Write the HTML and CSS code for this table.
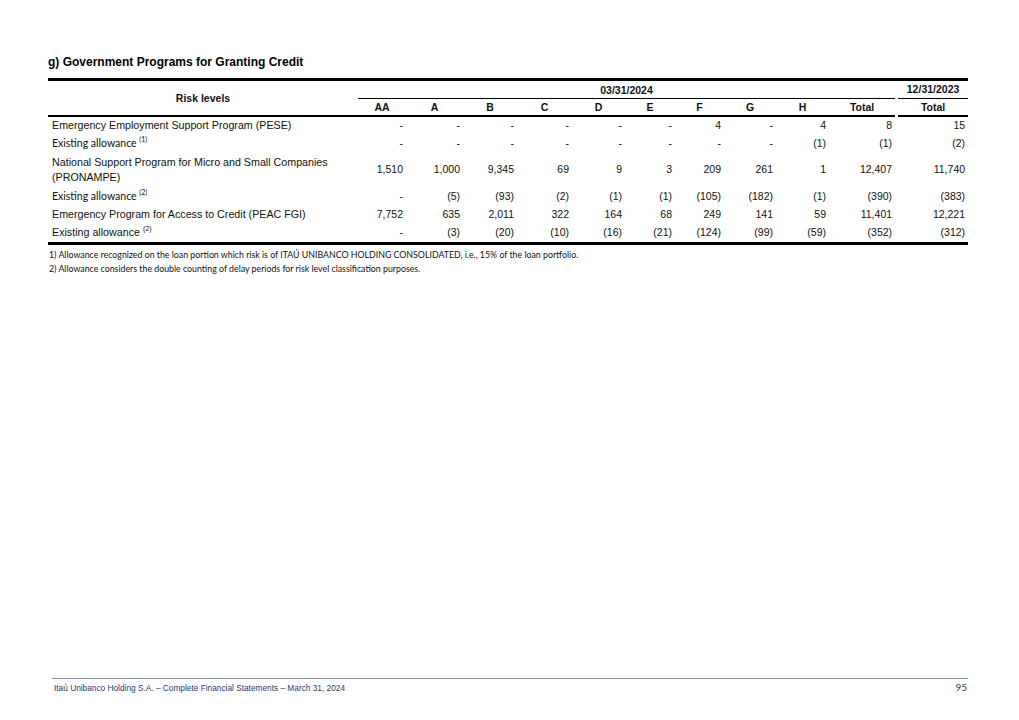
FILE: index.html
```html
<!DOCTYPE html>
<html lang="en">
<head>
<meta charset="utf-8">
<title>Government Programs for Granting Credit</title>
<link rel="stylesheet" href="styles.css">
</head>
<body>
<div class="page">
  <main class="content">
    <h2 class="title">g) Government Programs for Granting Credit</h2>
    <table class="grid">
      <colgroup>
        <col class="c-label">
        <col class="c-aa"><col class="c-a"><col class="c-b"><col class="c-c"><col class="c-d">
        <col class="c-e"><col class="c-f"><col class="c-g"><col class="c-h"><col class="c-tot">
        <col class="c-tot23">
      </colgroup>
      <thead>
        <tr class="hr1">
          <th rowspan="2" class="risk">Risk levels</th>
          <th colspan="10" class="period">03/31/2024</th>
          <th class="y23"><div class="cap cap1">12/31/2023</div></th>
        </tr>
        <tr class="hr2">
          <th>AA</th><th>A</th><th>B</th><th>C</th><th>D</th><th>E</th><th>F</th><th>G</th><th>H</th><th>Total</th>
          <th class="y23"><div class="cap cap2">Total</div></th>
        </tr>
      </thead>
      <tbody>
        <tr class="r1">
          <td class="label">Emergency Employment Support Program (PESE)</td>
          <td>-</td><td>-</td><td>-</td><td>-</td><td>-</td><td>-</td><td>4</td><td>-</td><td>4</td><td>8</td><td>15</td>
        </tr>
        <tr class="r2">
          <td class="label cal">Existing allowance <sup>(1)</sup></td>
          <td>-</td><td>-</td><td>-</td><td>-</td><td>-</td><td>-</td><td>-</td><td>-</td><td>(1)</td><td>(1)</td><td>(2)</td>
        </tr>
        <tr class="r3">
          <td class="label">National Support Program for Micro and Small Companies<br>(PRONAMPE)</td>
          <td>1,510</td><td>1,000</td><td>9,345</td><td>69</td><td>9</td><td>3</td><td>209</td><td>261</td><td>1</td><td>12,407</td><td>11,740</td>
        </tr>
        <tr class="r4">
          <td class="label cal">Existing allowance <sup>(2)</sup></td>
          <td>-</td><td>(5)</td><td>(93)</td><td>(2)</td><td>(1)</td><td>(1)</td><td>(105)</td><td>(182)</td><td>(1)</td><td>(390)</td><td>(383)</td>
        </tr>
        <tr class="r5">
          <td class="label">Emergency Program for Access to Credit (PEAC FGI)</td>
          <td>7,752</td><td>635</td><td>2,011</td><td>322</td><td>164</td><td>68</td><td>249</td><td>141</td><td>59</td><td>11,401</td><td>12,221</td>
        </tr>
        <tr class="r6">
          <td class="label">Existing allowance <sup>(2)</sup></td>
          <td>-</td><td>(3)</td><td>(20)</td><td>(10)</td><td>(16)</td><td>(21)</td><td>(124)</td><td>(99)</td><td>(59)</td><td>(352)</td><td>(312)</td>
        </tr>
      </tbody>
    </table>
    <div class="notes">
      <p>1) Allowance recognized on the loan portion which risk is of ITAÚ UNIBANCO HOLDING CONSOLIDATED, i.e., 15% of the loan portfolio.</p>
      <p>2) Allowance considers the double counting of delay periods for risk level classification purposes.</p>
    </div>
  </main>
  <footer class="footer">
    <span class="foot-text">Itaú Unibanco Holding S.A. – Complete Financial Statements – March 31, 2024</span>
    <span class="foot-page">95</span>
  </footer>
</div>
</body>
</html>
```

FILE: styles.css
```css
html, body {
  margin: 0;
  padding: 0;
  background: #ffffff;
}

.page {
  width: 1019px;
  height: 720px;
  box-sizing: border-box;
  padding: 0 51px 0 48px;
  display: flex;
  flex-direction: column;
  font-family: "Liberation Sans", Arial, sans-serif;
  color: #111;
}

.content {
  flex: 0 0 auto;
}

.title {
  margin: 55px 0 0 0;
  font-size: 12px;
  line-height: 14px;
  font-weight: bold;
  color: #000;
}

.grid {
  margin-top: 9px;
  width: 920px;
  table-layout: fixed;
  border-collapse: separate;
  border-spacing: 0;
  font-size: 10.5px;
}

.c-label { width: 310px; }
.c-aa { width: 48px; }
.c-a { width: 57px; }
.c-b { width: 54px; }
.c-c { width: 55px; }
.c-d { width: 53px; }
.c-e { width: 50px; }
.c-f { width: 49px; }
.c-g { width: 52px; }
.c-h { width: 53px; }
.c-tot { width: 66px; }
.c-tot23 { width: 73px; }

.grid th {
  font-weight: bold;
  text-align: center;
  padding: 0;
  color: #111;
}

.hr1 th {
  border-top: 3px solid #000;
  height: 17px;
  vertical-align: middle;
}

.hr1 th.period {
  border-bottom: 1px solid #000;
}

.risk {
  border-bottom: 2px solid #000;
  padding-top: 2px;
}

.hr2 th {
  height: 16px;
  border-bottom: 2px solid #000;
  vertical-align: middle;
}

.grid th.y23 {
  vertical-align: bottom;
}

.hr2 th.y23 {
  border-bottom: 0;
}

.cap {
  margin-left: 3px;
}

.cap1 {
  height: 17px;
  line-height: 17px;
  border-bottom: 1px solid #000;
}

.cap2 {
  height: 16px;
  line-height: 16px;
  border-bottom: 2px solid #000;
}

.grid td {
  padding: 0 3px 0 0;
  text-align: right;
  vertical-align: middle;
  line-height: 15px;
  white-space: nowrap;
}

.grid td.label {
  text-align: left;
  padding: 0 0 0 4px;
  white-space: normal;
  font-size: 10.7px;
}

.grid td.cal {
  font-family: Lato, "Open Sans", sans-serif;
  font-size: 10.5px;
}

.grid sup {
  font-size: 7px;
  line-height: 0;
  vertical-align: 5px;
}

.r1 td { height: 17px; }
.r2 td { height: 18px; }
.r3 td { height: 35px; }
.r4 td { height: 18px; }
.r5 td { height: 18px; }
.r6 td { height: 19px; border-bottom: 3px solid #000; }

.notes {
  margin-top: 3px;
  font-family: Lato, "Open Sans", sans-serif;
  font-size: 8.8px;
  line-height: 14px;
  color: #111;
}

.notes p {
  margin: 0;
  padding-left: 1px;
}

.footer {
  margin-top: auto;
  margin-bottom: 26px;
  margin-left: 4px;
  border-top: 1px solid #8592b3;
  display: flex;
  justify-content: space-between;
  align-items: baseline;
  padding: 2px 1px 0 2px;
}

.foot-text {
  font-size: 8.3px;
  color: #1f3a78;
  line-height: 12px;
}

.foot-page {
  font-family: Lato, "Open Sans", sans-serif;
  font-size: 10px;
  color: #2b3b5e;
  line-height: 12px;
}
```
